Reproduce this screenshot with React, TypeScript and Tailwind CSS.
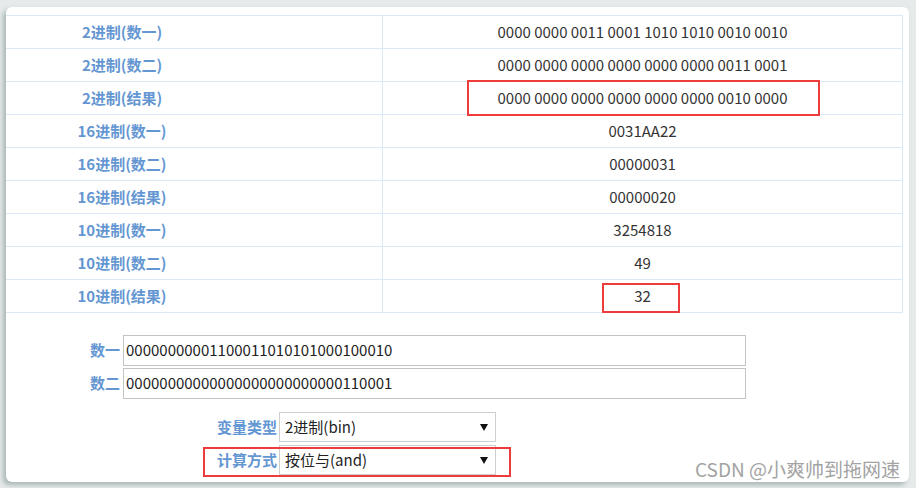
import React from 'react';

const rows: [string, string][] = [
  ['2进制(数一)', '0000 0000 0011 0001 1010 1010 0010 0010'],
  ['2进制(数二)', '0000 0000 0000 0000 0000 0000 0011 0001'],
  ['2进制(结果)', '0000 0000 0000 0000 0000 0000 0010 0000'],
  ['16进制(数一)', '0031AA22'],
  ['16进制(数二)', '00000031'],
  ['16进制(结果)', '00000020'],
  ['10进制(数一)', '3254818'],
  ['10进制(数二)', '49'],
  ['10进制(结果)', '32'],
];

function FakeSelect({ value }: { value: string }) {
  return (
    <div className="w-[217px] h-[30px] border border-[#cfcfcf] bg-white flex items-center justify-between pl-[5px] pr-[7px] text-[15px] text-[#222]">
      <span>{value}</span>
      <svg width="8" height="7" viewBox="0 0 8 7">
        <path d="M0 0h8L4 7z" fill="#111" />
      </svg>
    </div>
  );
}

/**
 * Bitwise calculator result panel
 */
export default function App() {
  return (
    <div className="w-[916px] h-[488px] bg-[#e7eaea] pt-[7px] pl-[6px] font-['Noto_Sans_CJK_SC',sans-serif]">
      <div className="relative w-[903px] h-[475px] bg-white rounded-[6px] pt-[8px] shadow-[-3px_3px_5px_rgba(90,120,120,0.45)]">
        <div className="w-[897px] border-t border-r border-[#dbe8f8]">
          {rows.map(([label, value]) => (
            <div key={label} className="flex h-[33px] border-b border-[#dbe8f8]">
              <div className="w-[377px] border-r border-[#dbe8f8] pr-[144px] flex items-center justify-center text-[15px] font-bold text-[#6496d2]">
                {label}
              </div>
              <div className="flex-1 flex items-center justify-center text-[15px] text-[#333]">
                {value}
              </div>
            </div>
          ))}
        </div>

        <div className="mt-[22px] flex flex-col gap-[2px]">
          <div className="flex items-center gap-[3px]">
            <div className="w-[114px] text-right text-[15px] font-bold text-[#6496d2]">数一</div>
            <div className="w-[623px] h-[31px] border border-[#c4c4c4] flex items-center pl-[2px] text-[15px] text-[#222]">
              00000000001100011010101000100010
            </div>
          </div>
          <div className="flex items-center gap-[3px]">
            <div className="w-[114px] text-right text-[15px] font-bold text-[#6496d2]">数二</div>
            <div className="w-[623px] h-[31px] border border-[#c4c4c4] flex items-center pl-[2px] text-[15px] text-[#222]">
              00000000000000000000000000110001
            </div>
          </div>
        </div>

        <div className="mt-[13px] flex flex-col gap-[3px]">
          <div className="flex items-center gap-[2px]">
            <div className="w-[271px] text-right text-[15px] font-bold text-[#6496d2]">变量类型</div>
            <FakeSelect value="2进制(bin)" />
          </div>
          <div className="flex items-center gap-[2px]">
            <div className="w-[271px] text-right text-[15px] font-bold text-[#6496d2]">计算方式</div>
            <FakeSelect value="按位与(and)" />
          </div>
        </div>

        {/* highlight annotations */}
        <div className="absolute left-[461px] top-[73px] w-[353px] h-[36px] border-2 border-[#ee3b3b]" />
        <div className="absolute left-[596px] top-[276px] w-[78px] h-[30px] border-2 border-[#ee3b3b]" />
        <div className="absolute left-[197px] top-[440px] w-[308px] h-[30px] border-2 border-[#ee3b3b]" />

        <div className="absolute top-[452px] right-[9px] text-[19px] leading-[20px] text-[#a3a3a3]">
          CSDN @小爽帅到拖网速
        </div>
      </div>
    </div>
  );
}
